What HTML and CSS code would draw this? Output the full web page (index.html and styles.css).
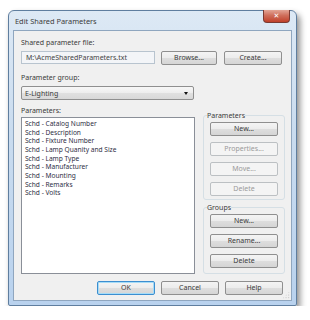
FILE: index.html
```html
<!DOCTYPE html>
<html>
<head>
    <meta name="viewport" content="width=device-width, initial-scale=1.0">
    <title>Edit Shared Parameters</title>
    <link rel="stylesheet" href="styles.css">
</head>
<body>
    <div class="window">
        <div class="titlebar">
            <span class="title">Edit Shared Parameters</span>
            <button class="close-btn">&#x2715;</button>
        </div>
        <div class="client">
            <div class="label">Shared parameter file:</div>
            <div class="file-row">
                <div class="textbox">M:\AcmeSharedParameters.txt</div>
                <button class="btn btn-browse">Browse...</button>
                <button class="btn btn-create">Create...</button>
            </div>
            <div class="label label-group">Parameter group:</div>
            <div class="dropdown">
                <span>E-Lighting</span>
                <span class="arrow"></span>
            </div>
            <div class="main-row">
                <div class="left-col">
                    <div class="label">Parameters:</div>
                    <ul class="param-list">
                        <li>Schd - Catalog Number</li>
                        <li>Schd - Description</li>
                        <li>Schd - Fixture Number</li>
                        <li>Schd - Lamp Quanity and Size</li>
                        <li>Schd - Lamp Type</li>
                        <li>Schd - Manufacturer</li>
                        <li>Schd - Mounting</li>
                        <li>Schd - Remarks</li>
                        <li>Schd - Volts</li>
                    </ul>
                </div>
                <div class="right-col">
                    <fieldset class="group group-params">
                        <legend>Parameters</legend>
                        <button class="btn btn-side">New...</button>
                        <button class="btn btn-side" disabled>Properties...</button>
                        <button class="btn btn-side" disabled>Move...</button>
                        <button class="btn btn-side" disabled>Delete</button>
                    </fieldset>
                    <fieldset class="group group-groups">
                        <legend>Groups</legend>
                        <button class="btn btn-side">New...</button>
                        <button class="btn btn-side">Rename...</button>
                        <button class="btn btn-side">Delete</button>
                    </fieldset>
                </div>
            </div>
            <div class="footer">
                <button class="btn btn-foot btn-default">OK</button>
                <button class="btn btn-foot">Cancel</button>
                <button class="btn btn-foot">Help</button>
            </div>
            <div class="grip"></div>
        </div>
    </div>
</body>
</html>
```

FILE: styles.css
```css
body {
    margin: 0;
    background: #fff;
    font-family: 'Noto Sans', 'DejaVu Sans', sans-serif;
    font-size: 7px;
    color: #3a3a3a;
}
.window {
    width: 289px;
    height: 296px;
    margin: 10px 0 0 8px;
    box-sizing: border-box;
    border: 1px solid #5f7e9f;
    border-radius: 6px 6px 2px 2px;
    background: linear-gradient(#dde9f5, #cadcef 40%, #b9d2ee);
    padding: 0 4px 4px 4px;
    display: flex;
    flex-direction: column;
    box-shadow: 3px 4px 6px rgba(0,0,0,0.45);
}
.titlebar {
    height: 19px;
    display: flex;
    justify-content: space-between;
    align-items: flex-start;
}
.title {
    margin: 5px 0 0 2px;
    color: #3c3c3c;
    font-size: 7.4px;
}
.close-btn {
    width: 27px;
    height: 13px;
    margin: -1px 2px 0 0;
    padding: 0;
    border: 1px solid #7a3a32;
    border-top: 0;
    border-radius: 0 0 4px 4px;
    background: linear-gradient(#e3a596, #cf6f5c 45%, #c0402a);
    color: #fff;
    font-size: 7px;
    font-weight: bold;
    line-height: 12px;
    font-family: 'DejaVu Sans', sans-serif;
}
.client {
    flex: 1;
    position: relative;
    background: #f0f0f0;
    border: 1px solid #8fa6bf;
    padding: 7px 7px 0 7px;
    display: flex;
    flex-direction: column;
}
.label {
    line-height: 9px;
    height: 9px;
}
.file-row {
    display: flex;
    margin-top: 4px;
    height: 14px;
}
.textbox {
    width: 134px;
    height: 13px;
    box-sizing: border-box;
    border: 1px solid #b8c4cf;
    background: #f3f5f8;
    padding: 0 4px;
    line-height: 11px;
    color: #444;
}
.btn {
    font-family: 'Noto Sans', 'DejaVu Sans', sans-serif;
    font-size: 7px;
    color: #3a3a3a;
    height: 14px;
    box-sizing: border-box;
    padding: 0;
    border: 1px solid #8f8f8f;
    border-radius: 2px;
    background: linear-gradient(#f4f4f4, #ececec 50%, #dedede 51%, #d5d5d5);
    line-height: 12px;
}
.btn:disabled {
    border-color: #bcc0c3;
    background: #f4f4f4;
    color: #9a9a9a;
}
.btn-browse {
    width: 56px;
    margin-left: 6px;
}
.btn-create {
    width: 58px;
    margin-left: 7px;
}
.label-group {
    margin-top: 8px;
}
.dropdown {
    width: 173px;
    height: 14px;
    margin-top: 4px;
    box-sizing: border-box;
    border: 1px solid #8f8f8f;
    border-radius: 2px;
    background: linear-gradient(#f7f7f7, #ededed 50%, #e0e0e0 51%, #d8d8d8);
    display: flex;
    justify-content: space-between;
    align-items: center;
    padding: 0 5px 0 3px;
}
.arrow {
    width: 0;
    height: 0;
    border-left: 2.5px solid transparent;
    border-right: 2.5px solid transparent;
    border-top: 3px solid #111;
}
.main-row {
    display: flex;
    margin-top: 6px;
    gap: 8px;
}
.left-col {
    width: 174px;
}
.param-list {
    list-style: none;
    margin: 2px 0 0 0;
    padding: 2px 3px;
    height: 157px;
    box-sizing: border-box;
    border: 1px solid #8a8f98;
    background: #fff;
    color: #2e2e44;
    font-size: 6.6px;
}
.param-list li {
    height: 8.67px;
    line-height: 8.67px;
    white-space: nowrap;
}
.right-col {
    width: 81px;
    margin-top: 5px;
    display: flex;
    flex-direction: column;
}
.group {
    margin: 0;
    border: 1px solid #d5dfe5;
    border-radius: 3px;
    padding: 2px 6px 3px 6px;
    display: flex;
    flex-direction: column;
    gap: 6px;
}
.group legend {
    padding: 0;
    margin-left: -3px;
    line-height: 9px;
}
.group-groups {
    margin-top: 3px;
    flex: 1;
    padding-top: 2px;
}
.btn-side {
    width: 68px;
}
.footer {
    display: flex;
    justify-content: flex-end;
    gap: 6px;
    margin-top: 7px;
    padding-right: 1px;
}
.btn-foot {
    width: 58px;
}
.btn-default {
    border-color: #3c8ed0;
    box-shadow: inset 0 0 0 1px #a6dcf7;
}
.grip {
    position: absolute;
    right: 1px;
    bottom: 1px;
    width: 8px;
    height: 8px;
    background: radial-gradient(circle, #b9b9b9 0.6px, transparent 0.9px) 0 0 / 2.7px 2.7px;
    clip-path: polygon(100% 0, 100% 100%, 0 100%);
}
```
